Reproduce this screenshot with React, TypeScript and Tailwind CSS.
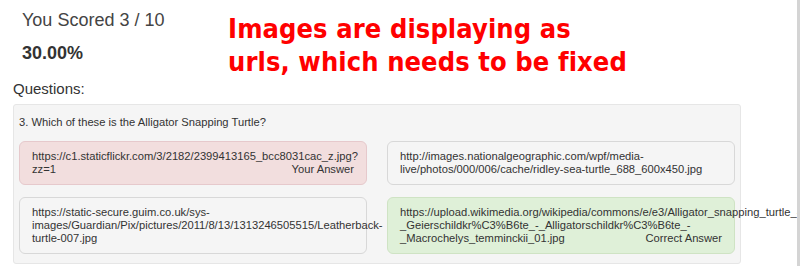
import React from 'react';

type Answer = { url: string; tone: 'wrong' | 'right' | 'plain'; label?: string };

const ANSWERS: Answer[] = [
  { url: 'https://c1.staticflickr.com/3/2182/2399413165_bcc8031cac_z.jpg?zz=1', tone: 'wrong', label: 'Your Answer' },
  { url: 'http://images.nationalgeographic.com/wpf/media-live/photos/000/006/cache/ridley-sea-turtle_688_600x450.jpg', tone: 'plain' },
  { url: 'https://static-secure.guim.co.uk/sys-images/Guardian/Pix/pictures/2011/8/13/1313246505515/Leatherback-turtle-007.jpg', tone: 'plain' },
  {
    url: 'https://upload.wikimedia.org/wikipedia/commons/e/e3/Alligator_snapping_turtle_-_Geierschildkr%C3%B6te_-_Alligatorschildkr%C3%B6te_-_Macrochelys_temminckii_01.jpg',
    tone: 'right',
    label: 'Correct Answer',
  },
];

const TONES = {
  wrong: 'bg-[#f2dede] border-[#e6c9cc]',
  right: 'bg-[#dff0d8] border-[#cfe3c4]',
  plain: 'bg-[#f5f5f5] border-[#d8d8d8]',
};

export default function App() {
  return (
    <div className="w-[800px] h-[266px] overflow-hidden border-r-[3px] border-[#d4d4d4] bg-white text-[#333] font-['Liberation_Sans',Arial,sans-serif]">
      {/* header */}
      <div className="flex">
        <div className="w-[228px] pl-[22px] pt-[9px]">
          <div className="text-[18px] leading-[22px] text-[#444]">You Scored 3 / 10</div>
          <div className="text-[18px] leading-[22px] font-bold mt-[11px]">30.00%</div>
        </div>
        <div className="pt-[12px] text-[27px] leading-[33px] font-bold text-[#ff0000] tracking-[0.1px] font-['DejaVu_Sans_Condensed','DejaVu_Sans',sans-serif]">
          Images are displaying as
          <br />
          urls, which needs to be fixed
        </div>
      </div>

      <div className="pl-[13px] mt-[2px] text-[15px] leading-[18px]">Questions:</div>

      {/* question panel */}
      <div className="ml-[13px] mt-[6px] w-[728px] bg-[#f5f5f5] border border-[#e6e6e6] rounded-[3px] px-[5px] pt-[10px] pb-[9px]">
        <div className="text-[11.2px] leading-[14px] mb-[12px]">3. Which of these is the Alligator Snapping Turtle?</div>
        <div className="grid grid-cols-2 gap-x-[20px] gap-y-[12px]">
          {ANSWERS.map((a, i) => (
            <div key={i} className={`border rounded-[6px] px-[12px] py-[8px] text-[11.2px] leading-[13px] ${TONES[a.tone]}`}>
              {a.url}
              {a.label && <span className="float-right">{a.label}</span>}
            </div>
          ))}
        </div>
      </div>
    </div>
  );
}
